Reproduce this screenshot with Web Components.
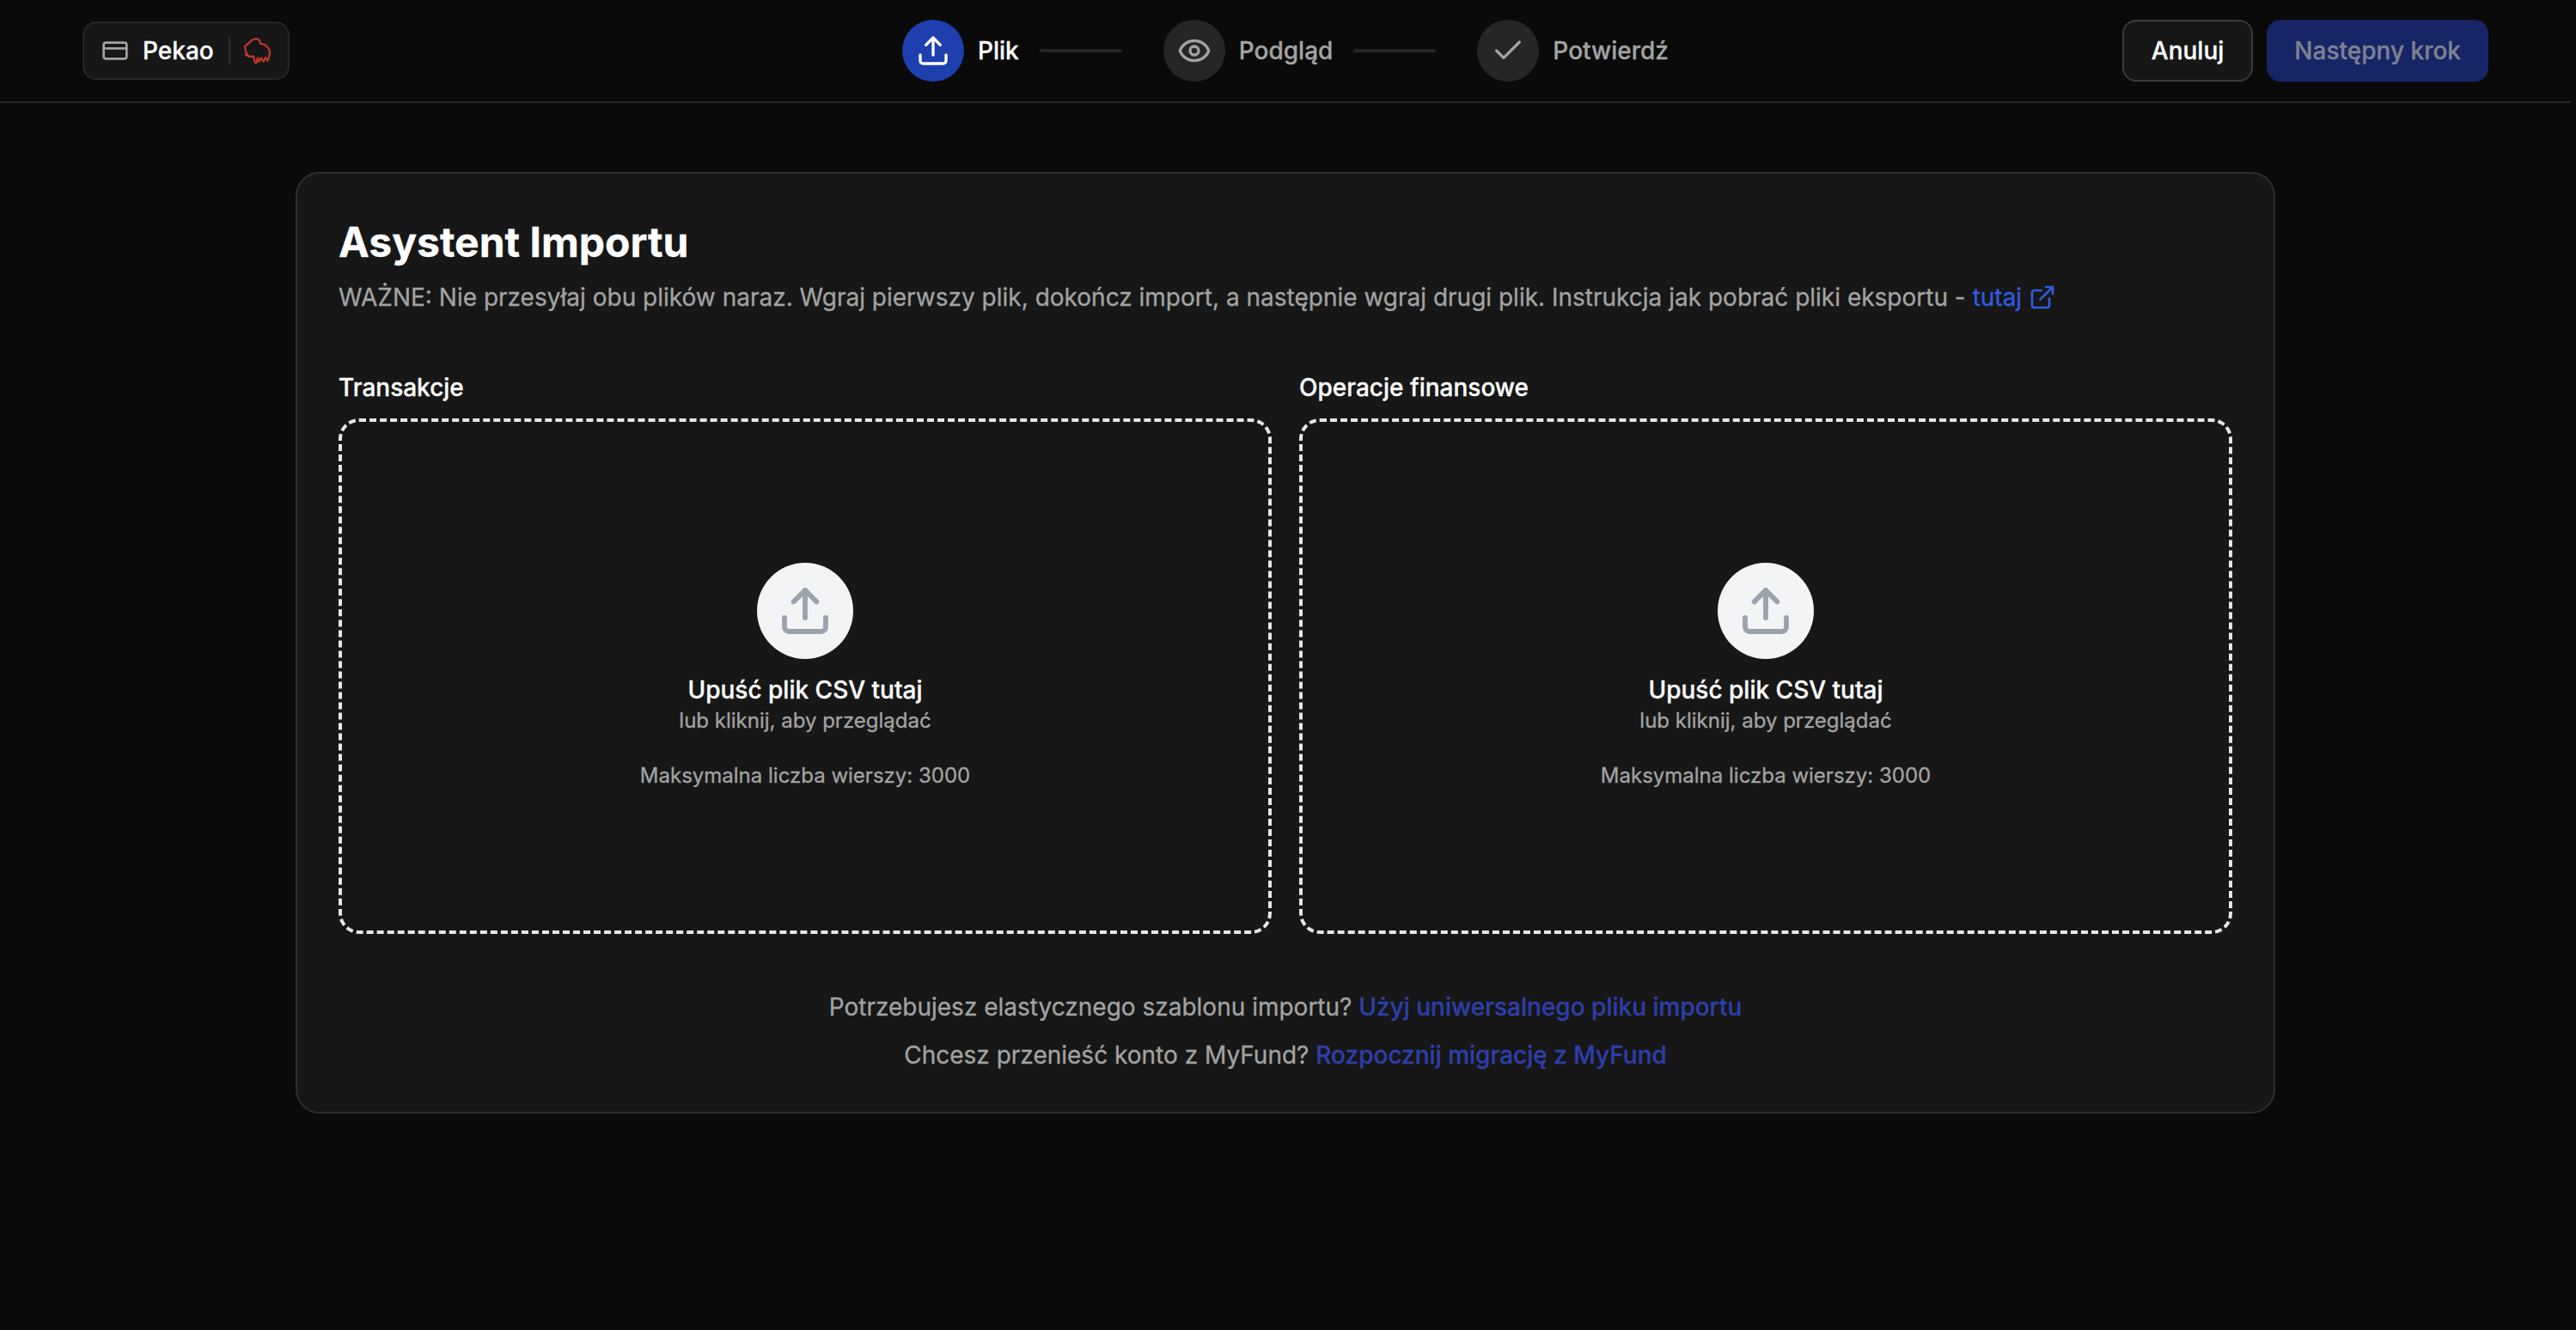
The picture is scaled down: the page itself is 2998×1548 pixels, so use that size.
<!DOCTYPE html>
<html lang="pl">
<head>
<meta charset="utf-8">
<title>Asystent Importu</title>
<style>
  html, body { margin: 0; height: 100%; background: #0a0a0a; }
  body { font-family: Inter, "Noto Sans", sans-serif; color: #fff; overflow: hidden; width: 2992px; -webkit-text-stroke: 0.3px; }
</style>
</head>
<body>
<import-header>
  <account-chip slot="left" name="Pekao"></account-chip>
  <import-step slot="center" icon="upload" label="Plik" active></import-step>
  <import-step slot="center" icon="eye" label="Podgląd" connector></import-step>
  <import-step slot="center" icon="check" label="Potwierdź" connector></import-step>
  <ui-button slot="right" variant="outline">Anuluj</ui-button>
  <ui-button slot="right" variant="primary">Następny krok</ui-button>
</import-header>

<import-card heading="Asystent Importu">
  <span slot="intro">WAŻNE: Nie przesyłaj obu plików naraz. Wgraj pierwszy plik, dokończ import, a następnie wgraj drugi plik. Instrukcja jak pobrać pliki eksportu - <ext-link>tutaj</ext-link></span>
  <drop-zone label="Transakcje"></drop-zone>
  <drop-zone label="Operacje finansowe"></drop-zone>
  <help-line slot="help" link="Użyj uniwersalnego pliku importu">Potrzebujesz elastycznego szablonu importu?</help-line>
  <help-line slot="help" link="Rozpocznij migrację z MyFund">Chcesz przenieść konto z MyFund?</help-line>
</import-card>

<script>
// lucide-shaped icons, all on a 24 unit box
const ICONS = {
  upload: '<path d="M21 15v4a2 2 0 0 1-2 2H5a2 2 0 0 1-2-2v-4"/><path d="M17 8l-5-5-5 5"/><path d="M12 3v12"/>',
  eye: '<path d="M2.06 12.35a1 1 0 0 1 0-.7 10.75 10.75 0 0 1 19.88 0 1 1 0 0 1 0 .7 10.75 10.75 0 0 1-19.88 0"/><circle cx="12" cy="12" r="3"/>',
  check: '<path d="M20 6 9 17l-5-5"/>',
  card: '<rect x="2" y="5" width="20" height="14" rx="2"/><path d="M2 10h20"/>',
  external: '<path d="M15 3h6v6"/><path d="M10 14 21 3"/><path d="M18 13v6a2 2 0 0 1-2 2H5a2 2 0 0 1-2-2V8a2 2 0 0 1 2-2h6"/>'
};
const icon = (name, size, width = 2) =>
  `<svg width="${size}" height="${size}" viewBox="0 0 24 24" fill="none" stroke="currentColor" stroke-width="${width}" stroke-linecap="round" stroke-linejoin="round">${ICONS[name]}</svg>`;

function shadow(el, html) {
  el.attachShadow({ mode: "open" }).innerHTML = html;
}

class ImportHeader extends HTMLElement {
  constructor() {
    super();
    shadow(this, `
      <style>
        :host { display: grid; grid-template-columns: 1fr auto 1fr; align-items: center; height: 118px; padding: 0 96px; border-bottom: 2px solid #262626; background: #0a0a0a; }
        .right { display: flex; justify-content: flex-end; gap: 16px; }
        .center { display: flex; align-items: center; }
      </style>
      <div><slot name="left"></slot></div>
      <div class="center"><slot name="center"></slot></div>
      <div class="right"><slot name="right"></slot></div>`);
  }
}

class AccountChip extends HTMLElement {
  constructor() {
    super();
    shadow(this, `
      <style>
        :host { display: inline-flex; align-items: center; box-sizing: border-box; height: 68px; width: 241px; padding: 0 20px; background: #171717; border: 2px solid #262626; border-radius: 16px; vertical-align: middle; }
        .card { display: flex; color: #a3a3a3; margin-right: 16px; }
        .name { font: 500 28px/1 Inter, sans-serif; color: #fff; }
        .sep { width: 2px; height: 32px; background: #2e2e2e; margin: 0 15px 0 17px; }
        .logo { display: flex; }
      </style>
      <span class="card">${icon("card", 32, 2)}</span>
      <span class="name">${this.getAttribute("name")}</span>
      <span class="sep"></span>
      <span class="logo">
        <svg width="32" height="32" viewBox="0 0 32 32" fill="none" stroke="#c0392b" stroke-width="2.2" stroke-linecap="round" stroke-linejoin="round">
          <path d="M7 23C4 20.5 2.4 15 2 11c1-2 4-2.6 7.2-6.5C11 2.4 16 1.4 18 3c1.6 1.4 1.4 4 2.4 4.8C23 8 27.6 9.4 30 14.3c1.4 3 1.2 8-1.7 13.4"/>
          <path d="M2.7 20.5C5 23 9 23.2 11.4 22.4c1.6.6 1.4 4.6 2.3 7.4.8.6 1.6.6 2.2-.2.4-1.8.2-4.6.9-5.2 1-.1 1 4.2 1.9 4.2 1-.1 1.1-4 2.2-4.4 1-.1 1.4 4.2 2.7 4.4 1.2-.2 1-3.8 2.2-4.4 1.1 0 1.6 1 2.4 3.2"/>
        </svg>
      </span>`);
  }
}

class ImportStep extends HTMLElement {
  constructor() {
    super();
    const active = this.hasAttribute("active");
    shadow(this, `
      <style>
        :host { display: flex; align-items: center; }
        .line { width: 96px; height: 4px; background: #262626; margin: 0 48px 0 24px; border-radius: 2px; }
        .dot { width: 72px; height: 72px; border-radius: 50%; display: flex; align-items: center; justify-content: center; background: ${active ? "#1e40af" : "#262626"}; color: ${active ? "#fff" : "#a3a3a3"}; }
        .label { margin-left: 16px; font: 500 28px/40px Inter, sans-serif; color: ${active ? "#fff" : "#a3a3a3"}; }
      </style>
      ${this.hasAttribute("connector") ? '<span class="line"></span>' : ""}
      <span class="dot">${icon(this.getAttribute("icon"), 40, 2)}</span>
      <span class="label">${this.getAttribute("label")}</span>`);
  }
}

class UiButton extends HTMLElement {
  constructor() {
    super();
    const primary = this.getAttribute("variant") === "primary";
    shadow(this, `
      <style>
        :host { display: inline-flex; align-items: center; box-sizing: border-box; height: 72px; padding: 0 ${primary ? 30 : 32}px; border-radius: 16px; font: 500 28px/1 Inter, sans-serif;
          background: ${primary ? "#172466" : "#171717"}; color: ${primary ? "#7d8292" : "#fff"}; border: 2px solid ${primary ? "#172466" : "#3a3a3a"}; }
      </style>
      <slot></slot>`);
  }
}

class ExtLink extends HTMLElement {
  constructor() {
    super();
    shadow(this, `
      <style>
        :host { display: inline; color: #2f5ce0; }
        svg { vertical-align: -6px; margin-left: 8px; }
      </style>
      <slot></slot>${icon("external", 32, 2)}`);
  }
}

class ImportCard extends HTMLElement {
  constructor() {
    super();
    shadow(this, `
      <style>
        :host { display: block; box-sizing: border-box; width: 2304px; margin: 80px auto 0; padding: 48px; height: 1096px; background: #171717; border: 2px solid #2e2e2e; border-radius: 28px; }
        h1 { margin: 0; font: 700 48px/64px Inter, sans-serif; color: #fff; }
        .intro { margin: 8px 0 0; font: 400 28px/48px Inter, sans-serif; color: #a3a3a3; }
        .zones { display: grid; grid-template-columns: 1fr 1fr; gap: 32px; margin-top: 61px; }
        .help { margin-top: 65px; display: flex; flex-direction: column; align-items: center; gap: 16px; }
      </style>
      <h1>${this.getAttribute("heading")}</h1>
      <p class="intro"><slot name="intro"></slot></p>
      <div class="zones"><slot></slot></div>
      <div class="help"><slot name="help"></slot></div>`);
  }
}

class DropZone extends HTMLElement {
  constructor() {
    super();
    shadow(this, `
      <style>
        :host { display: block; }
        .label { font: 500 28px/40px Inter, sans-serif; color: #fff; margin-bottom: 16px; }
        .zone { box-sizing: border-box; height: 600px; border: 4px dashed #e5e7eb; border-radius: 24px; display: flex; flex-direction: column; align-items: center; justify-content: center; }
        .circle { width: 112px; height: 112px; border-radius: 50%; background: #f3f4f6; color: #9ca3af; display: flex; align-items: center; justify-content: center; margin-bottom: 16px; }
        .title { font: 500 28px/40px Inter, sans-serif; color: #fff; }
        .sub { font: 400 24px/32px Inter, sans-serif; color: #a3a3a3; }
        .max { font: 400 24px/32px Inter, sans-serif; color: #a3a3a3; margin-top: 32px; }
      </style>
      <div class="label">${this.getAttribute("label")}</div>
      <div class="zone">
        <div class="circle">${icon("upload", 64, 2.2)}</div>
        <div class="title">Upuść plik CSV tutaj</div>
        <div class="sub">lub kliknij, aby przeglądać</div>
        <div class="max">Maksymalna liczba wierszy: 3000</div>
      </div>`);
  }
}

class HelpLine extends HTMLElement {
  constructor() {
    super();
    shadow(this, `
      <style>
        :host { display: block; font: 400 28px/40px Inter, sans-serif; color: #a3a3a3; }
        a { color: #2c3fa8; font-weight: 500; text-decoration: none; }
      </style>
      <slot></slot> <a href="#">${this.getAttribute("link")}</a>`);
  }
}

customElements.define("import-header", ImportHeader);
customElements.define("account-chip", AccountChip);
customElements.define("import-step", ImportStep);
customElements.define("ui-button", UiButton);
customElements.define("ext-link", ExtLink);
customElements.define("import-card", ImportCard);
customElements.define("drop-zone", DropZone);
customElements.define("help-line", HelpLine);
</script>
</body>
</html>
